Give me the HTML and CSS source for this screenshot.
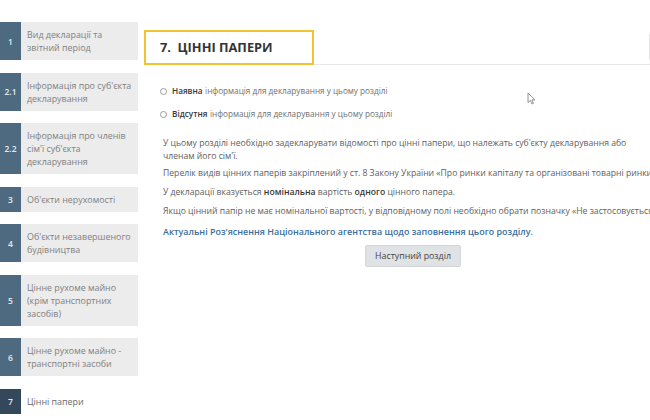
FILE: index.html
```html
<!DOCTYPE html>
<html lang="uk">
<head>
<meta charset="utf-8">
<title>Цінні папери</title>
<link rel="stylesheet" href="styles.css">
</head>
<body>
<div class="page">
  <nav class="sidebar">
    <div class="step"><span class="num">1</span><span class="label">Вид декларації та<br>звітний період</span></div>
    <div class="step"><span class="num">2.1</span><span class="label">Інформація про суб'єкта<br>декларування</span></div>
    <div class="step"><span class="num">2.2</span><span class="label">Інформація про членів<br>сім'ї суб'єкта<br>декларування</span></div>
    <div class="step"><span class="num">3</span><span class="label">Об'єкти нерухомості</span></div>
    <div class="step"><span class="num">4</span><span class="label">Об'єкти незавершеного<br>будівництва</span></div>
    <div class="step"><span class="num">5</span><span class="label">Цінне рухоме майно<br>(крім транспортних<br>засобів)</span></div>
    <div class="step"><span class="num">6</span><span class="label">Цінне рухоме майно -<br>транспортні засоби</span></div>
    <div class="step active"><span class="num">7</span><span class="label">Цінні папери</span></div>
  </nav>
  <main class="content">
    <div class="header">
      <h1 class="title">7.&nbsp; ЦІННІ ПАПЕРИ</h1>
      <span class="side-btn"></span>
    </div>
    <div class="options">
      <label class="option"><span class="radio"></span><b>Наявна</b> інформація для декларування у цьому розділі</label>
      <label class="option"><span class="radio"></span><b>Відсутня</b> інформація для декларування у цьому розділі</label>
    </div>
    <div class="info">
      <p>У цьому розділі необхідно задекларувати відомості про цінні папери, що належать суб'єкту декларування або<br>членам його сім'ї.</p>
      <p>Перелік видів цінних паперів закріплений у ст. 8 Закону України «Про ринки капіталу та організовані товарні ринки»</p>
      <p>У декларації вказується <b>номінальна</b> вартість <b>одного</b> цінного папера.</p>
      <p>Якщо цінний папір не має номінальної вартості, у відповідному полі необхідно обрати позначку «Не застосовується».</p>
      <p class="link-row"><a class="link" href="#">Актуальні Роз'яснення Національного агентства щодо заповнення цього розділу.</a></p>
    </div>
    <div class="actions"><button class="next">Наступний розділ</button></div>
  </main>
</div>
<svg class="cursor" width="9" height="13" viewBox="0 0 9 13"><path d="M1 1 L1 10.5 L3.4 8.4 L5 12 L6.4 11.4 L4.9 7.9 L8 7.9 Z" fill="#fff" stroke="#777" stroke-width="0.8" stroke-linejoin="round"/></svg>
</body>
</html>
```

FILE: styles.css
```css
html, body {
  margin: 0;
  padding: 0;
  background: #ffffff;
  overflow: hidden;
}
body {
  width: 650px;
  height: 420px;
  position: relative;
  font-family: "Open Sans", "Liberation Sans", sans-serif;
}
.page {
  display: flex;
  align-items: flex-start;
}
.sidebar {
  width: 138px;
  flex: none;
  padding-top: 22px;
  display: flex;
  flex-direction: column;
  gap: 12.5px;
}
.step {
  display: flex;
  align-items: stretch;
  background: #ececec;
}
.num {
  width: 21px;
  flex: none;
  background: #4e6a80;
  color: #e4eaef;
  font-size: 8.5px;
  font-weight: 600;
  display: flex;
  align-items: center;
  justify-content: center;
}
.label {
  padding: 6px 0 6px 6px;
  font-size: 8.9px;
  line-height: 13px;
  color: #808080;
  white-space: nowrap;
}
.step.active {
  background: transparent;
}
.step.active .num {
  background: #33485a;
}
.step.active .label {
  color: #6a6a6a;
}
.content {
  flex: none;
  width: 520px;
  margin-left: 6px;
  padding-top: 30px;
}
.header {
  display: flex;
  align-items: flex-start;
  border-bottom: 1px solid #e8e8e8;
  height: 34px;
}
.title {
  margin: 0;
  box-sizing: border-box;
  width: 170px;
  height: 35px;
  border: 2px solid #f1c232;
  padding-left: 14px;
  font-size: 12.8px;
  font-weight: 700;
  line-height: 31px;
  color: #333333;
}
.side-btn {
  margin-left: auto;
  margin-top: 3px;
  width: 14px;
  height: 26px;
  border: 1px solid #e2e2e2;
  border-right: none;
  border-radius: 3px 0 0 3px;
}
.options {
  padding: 19px 0 0 16px;
  display: flex;
  flex-direction: column;
  gap: 9px;
}
.option {
  display: flex;
  align-items: center;
  font-size: 8.2px;
  line-height: 14px;
  color: #707070;
  white-space: nowrap;
}
.option b {
  color: #383838;
  font-weight: 600;
  margin-right: 2.5px;
}
.radio {
  width: 5px;
  height: 5px;
  border: 1px solid #9a9a9a;
  border-radius: 50%;
  margin-right: 5px;
  flex: none;
}
.info {
  padding: 16px 0 0 19px;
}
.info p {
  margin: 0 0 6px 0;
  font-size: 8.65px;
  line-height: 13px;
  color: #606060;
  white-space: nowrap;
}
.info p:first-child {
  margin-bottom: 4px;
}
.info p.link-row {
  margin-top: 7px;
}
.info p b {
  color: #383838;
  font-weight: 600;
}
.link {
  color: #3a6e9b;
  font-size: 8.95px;
  font-weight: 600;
  text-decoration: none;
}
.actions {
  padding: 0 0 0 221px;
  margin-top: -3px;
}
.next {
  width: 96px;
  height: 22px;
  border: 1px solid #d3d7da;
  border-radius: 2px;
  background: #dfe3e6;
  color: #454545;
  font-family: "Open Sans", "Liberation Sans", sans-serif;
  font-size: 8.8px;
  padding: 0;
}
.cursor {
  position: absolute;
  left: 527px;
  top: 92px;
}
```
